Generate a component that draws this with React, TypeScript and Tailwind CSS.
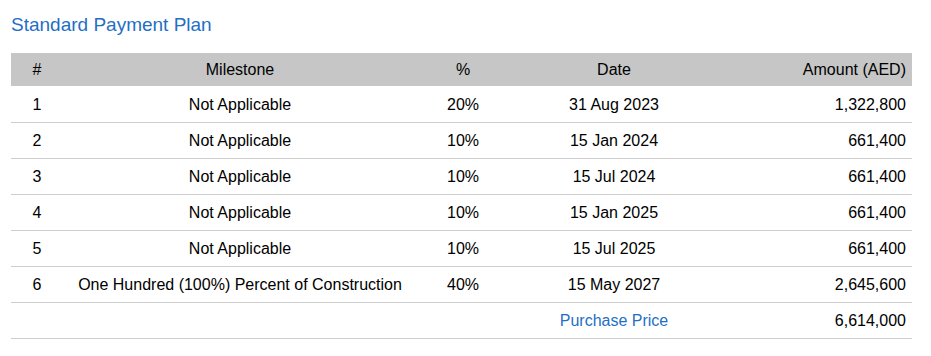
import React from 'react';

interface Installment {
  no: string;
  milestone: string;
  percent: string;
  date: string;
  amount: string;
}

const installments: Installment[] = [
  { no: '1', milestone: 'Not Applicable', percent: '20%', date: '31 Aug 2023', amount: '1,322,800' },
  { no: '2', milestone: 'Not Applicable', percent: '10%', date: '15 Jan 2024', amount: '661,400' },
  { no: '3', milestone: 'Not Applicable', percent: '10%', date: '15 Jul 2024', amount: '661,400' },
  { no: '4', milestone: 'Not Applicable', percent: '10%', date: '15 Jan 2025', amount: '661,400' },
  { no: '5', milestone: 'Not Applicable', percent: '10%', date: '15 Jul 2025', amount: '661,400' },
  { no: '6', milestone: 'One Hundred (100%) Percent of Construction', percent: '40%', date: '15 May 2027', amount: '2,645,600' },
];

export default function App() {
  return (
    <div className="w-[931px] h-[356px] bg-white px-[11px] pt-[13px] font-['Liberation_Sans',Arial,sans-serif] text-[16px] text-black">
      <h2 className="text-[19px] leading-[24px] text-[#1f6fc5] mb-[16px]">Standard Payment Plan</h2>

      <table className="w-[901px] table-fixed border-collapse">
        <colgroup>
          <col className="w-[52px]" />
          <col className="w-[354px]" />
          <col className="w-[92px]" />
          <col className="w-[210px]" />
          <col className="w-[193px]" />
        </colgroup>
        {/* Header */}
        <thead>
          <tr className="bg-[#c6c6c6] h-[33px]">
            <th className="font-normal text-center pt-[1px]">#</th>
            <th className="font-normal text-center pt-[1px]">Milestone</th>
            <th className="font-normal text-center pt-[1px]">%</th>
            <th className="font-normal text-center pt-[1px]">Date</th>
            <th className="font-normal text-right pr-[6px] pt-[1px]">Amount (AED)</th>
          </tr>
        </thead>
        <tbody>
          {installments.map((row) => (
            <tr key={row.no} className="h-[36px] border-b border-[#cfcfcf]">
              <td className="text-center pt-[2px]">{row.no}</td>
              <td className="text-center pt-[2px]">{row.milestone}</td>
              <td className="text-center pt-[2px]">{row.percent}</td>
              <td className="text-center pt-[2px]">{row.date}</td>
              <td className="text-right pr-[6px] pt-[2px]">{row.amount}</td>
            </tr>
          ))}
          <tr className="h-[36px] border-b border-[#cfcfcf]">
            <td colSpan={3}></td>
            <td className="text-center text-[#1f6fc5] pt-[2px]">Purchase Price</td>
            <td className="text-right pr-[6px] pt-[2px]">6,614,000</td>
          </tr>
        </tbody>
      </table>
    </div>
  );
}
